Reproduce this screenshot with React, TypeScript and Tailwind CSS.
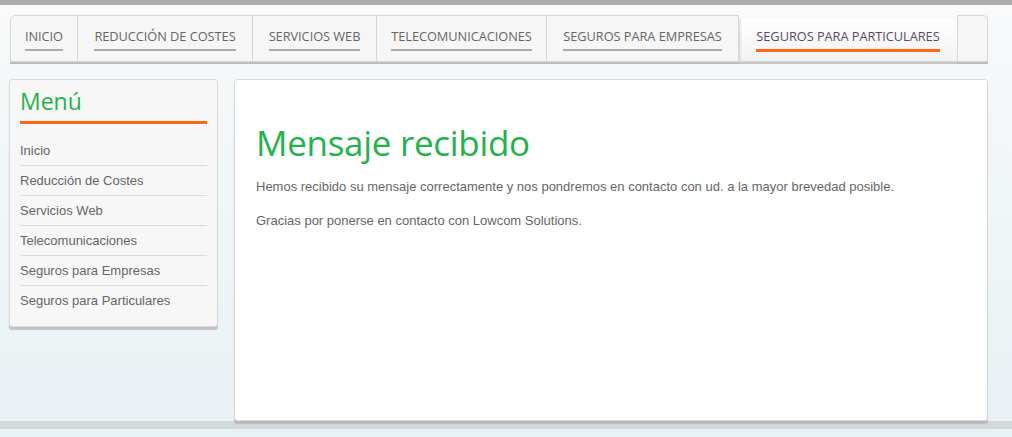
const tabs = [
  { label: "Inicio", w: "w-[68px]" },
  { label: "Reducción de Costes", w: "w-[175px]" },
  { label: "Servicios Web", w: "w-[124px]" },
  { label: "Telecomunicaciones", w: "w-[170px]" },
  { label: "Seguros para Empresas", w: "w-[192px]" },
  { label: "Seguros para Particulares", w: "w-[218px]" },
];

const menu = tabs.map((t) => t.label);

export default function App() {
  return (
    <div className="min-h-[437px] bg-gradient-to-b from-[#f8fafb] to-[#e8f1f4] font-['Liberation_Sans',Arial,sans-serif]">
      <div className="h-[5px] bg-[#acacac]" />
      <nav className="ml-[10px] mt-[10px] flex items-start font-['Open_Sans',sans-serif]">
        {tabs.map((t, i) => {
          const active = i === tabs.length - 1;
          return (
            <div
              key={t.label}
              className={
                active
                  ? `${t.w} mt-[4px] flex h-[43px] shrink-0 items-start justify-center border-b border-[#d6d6d6] bg-gradient-to-b from-[#ffffff] to-[#f2f2f2] pt-[9px] shadow-[inset_3px_0_3px_-2px_#d0d0d0,0_2px_0_#c6c6c6]`
                  : `${t.w} flex h-[47px] shrink-0 items-start justify-center border-y border-r border-[#d6d6d6] bg-[#f6f6f6] pt-[12px] shadow-[0_2px_0_#bdbdbd] ${
                      i === 0 ? "rounded-tl-[5px] border-l" : ""
                    }`
              }
            >
              <span
                className={`whitespace-nowrap pb-[5px] text-[12.8px] uppercase leading-[16px] tracking-[-0.05px] ${
                  active ? "border-b-[3px] border-[#ff6a13] text-[#5a4a63]" : "border-b-2 border-[#aaaaaa] text-[#666]"
                }`}
              >
                {t.label}
              </span>
            </div>
          );
        })}
        <div className="h-[47px] w-[31px] shrink-0 rounded-tr-[5px] border-y border-r border-l border-[#d6d6d6] bg-[#f6f6f6] shadow-[0_2px_0_#bdbdbd]" />
      </nav>

      <div className="ml-[9px] mt-[17px] flex h-[342px] items-start gap-[16px]">
        <aside className="w-[209px] rounded-[3px] border border-[#dadada] bg-[#f7f7f7] px-[10px] pb-[10px] pt-[6px] shadow-[0_3px_1px_#c2c2c2]">
          <div className="font-['Open_Sans',sans-serif] text-[23px] leading-[30px] text-[#2bb04c]">Menú</div>
          <div className="mt-[5px] h-[3px] bg-[#ff6613]" />
          <ul className="mt-[12px]">
            {menu.map((m, i) => (
              <li
                key={m}
                className={`flex h-[30px] items-center text-[13px] text-[#666] ${
                  i < menu.length - 1 ? "border-b border-[#dddddd]" : ""
                }`}
              >
                {m}
              </li>
            ))}
          </ul>
        </aside>

        <main className="h-[342px] w-[754px] rounded-[3px] border border-[#dcdcdc] bg-white px-[21px] pt-[40px] shadow-[0_3px_1px_#b8b8b8]">
          <h1 className="font-['Open_Sans',sans-serif] text-[35px] leading-[46px] tracking-[-0.3px] text-[#23b24b]">
            Mensaje recibido
          </h1>
          <p className="mt-[13px] text-[13px] leading-[16px] text-[#666]">
            Hemos recibido su mensaje correctamente y nos pondremos en contacto con ud. a la mayor brevedad posible.
          </p>
          <p className="mt-[18px] text-[13px] leading-[16px] text-[#666]">
            Gracias por ponerse en contacto con Lowcom Solutions.
          </p>
        </main>
      </div>
      <div className="h-[8px] bg-[#d3dadc]" />
    </div>
  );
}
